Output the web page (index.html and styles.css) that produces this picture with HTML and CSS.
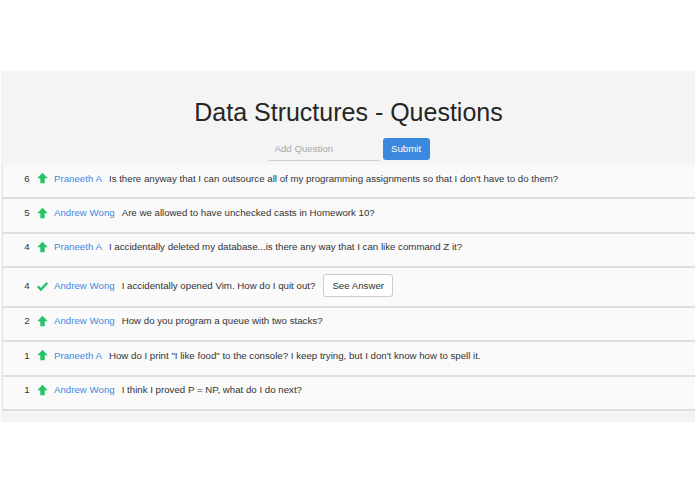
FILE: index.html
```html
<!DOCTYPE html>
<html>
<head>
<meta charset="utf-8">
<link rel="stylesheet" href="styles.css">
</head>
<body>
<div class="panel">
  <div class="header">
    <h1 class="title">Data Structures - Questions</h1>
    <form class="ask">
      <input class="ask-input" type="text" placeholder="Add Question">
      <button class="btn-submit" type="button">Submit</button>
    </form>
  </div>
  <ul class="questions">
    <li class="q">
      <span class="votes">6</span>
      <svg class="ico" viewBox="0 0 12 12"><path d="M6 0.3 L11.7 6.2 L8.4 6.2 L8.4 11.8 L3.6 11.8 L3.6 6.2 L0.3 6.2 Z" fill="#27c26a"/></svg>
      <a class="author">Praneeth A</a>
      <span class="text">Is there anyway that I can outsource all of my programming assignments so that I don't have to do them?</span>
    </li>
    <li class="q">
      <span class="votes">5</span>
      <svg class="ico" viewBox="0 0 12 12"><path d="M6 0.3 L11.7 6.2 L8.4 6.2 L8.4 11.8 L3.6 11.8 L3.6 6.2 L0.3 6.2 Z" fill="#27c26a"/></svg>
      <a class="author">Andrew Wong</a>
      <span class="text">Are we allowed to have unchecked casts in Homework 10?</span>
    </li>
    <li class="q">
      <span class="votes">4</span>
      <svg class="ico" viewBox="0 0 12 12"><path d="M6 0.3 L11.7 6.2 L8.4 6.2 L8.4 11.8 L3.6 11.8 L3.6 6.2 L0.3 6.2 Z" fill="#27c26a"/></svg>
      <a class="author">Praneeth A</a>
      <span class="text">I accidentally deleted my database...is there any way that I can like command Z it?</span>
    </li>
    <li class="q q-answered">
      <span class="votes">4</span>
      <svg class="ico" viewBox="0 0 12 12"><path d="M0.8 6.3 L4.3 9.8 L11.2 2.6" fill="none" stroke="#27c26a" stroke-width="2.6"/></svg>
      <a class="author">Andrew Wong</a>
      <span class="text">I accidentally opened Vim. How do I quit out?</span>
      <button class="btn-answer" type="button">See Answer</button>
    </li>
    <li class="q">
      <span class="votes">2</span>
      <svg class="ico" viewBox="0 0 12 12"><path d="M6 0.3 L11.7 6.2 L8.4 6.2 L8.4 11.8 L3.6 11.8 L3.6 6.2 L0.3 6.2 Z" fill="#27c26a"/></svg>
      <a class="author">Andrew Wong</a>
      <span class="text">How do you program a queue with two stacks?</span>
    </li>
    <li class="q">
      <span class="votes">1</span>
      <svg class="ico" viewBox="0 0 12 12"><path d="M6 0.3 L11.7 6.2 L8.4 6.2 L8.4 11.8 L3.6 11.8 L3.6 6.2 L0.3 6.2 Z" fill="#27c26a"/></svg>
      <a class="author">Praneeth A</a>
      <span class="text">How do I print "I like food" to the console? I keep trying, but I don't know how to spell it.</span>
    </li>
    <li class="q">
      <span class="votes">1</span>
      <svg class="ico" viewBox="0 0 12 12"><path d="M6 0.3 L11.7 6.2 L8.4 6.2 L8.4 11.8 L3.6 11.8 L3.6 6.2 L0.3 6.2 Z" fill="#27c26a"/></svg>
      <a class="author">Andrew Wong</a>
      <span class="text">I think I proved P = NP, what do I do next?</span>
    </li>
  </ul>
</div>
</body>
</html>
```
FILE: styles.css
```css
html, body {
  margin: 0;
  padding: 0;
  background: #ffffff;
  font-family: "Liberation Sans", Arial, sans-serif;
  color: #333333;
  overflow: hidden;
}
.panel {
  margin: 71px 0 0 2px;
  background: #f4f4f4;
  padding-bottom: 11px;
  box-shadow: 0 1px 2px rgba(0,0,0,0.15);
}
.header {
  padding-top: 26px;
  display: flex;
  flex-direction: column;
  align-items: center;
}
.title {
  margin: 0;
  font-size: 25px;
  font-weight: normal;
  line-height: 30px;
  color: #262626;
}
.ask {
  margin: 9px 0 4px 0;
  display: flex;
  align-items: center;
  gap: 3px;
}
.ask-input {
  width: 112px;
  height: 25px;
  box-sizing: border-box;
  border: none;
  border-bottom: 1px solid #cfcfcf;
  background: transparent;
  padding: 0 7px;
  font-family: inherit;
  font-size: 9.7px;
  outline: none;
}
.ask-input::placeholder {
  color: #a8a8a8;
}
.btn-submit {
  height: 22px;
  width: 47px;
  padding: 0;
  border: none;
  border-radius: 3px;
  background: #3b88df;
  color: #ffffff;
  font-family: inherit;
  font-size: 9.7px;
}
.questions {
  list-style: none;
  margin: 0;
  padding: 0;
}
.q {
  display: flex;
  align-items: center;
  box-sizing: border-box;
  height: 34.4px;
  padding: 0 0 6px 21px;
  background: #fafafa;
  border-bottom: 2px solid #dedede;
  border-left: 1px solid #e6e6e6;
  font-size: 9.7px;
  white-space: nowrap;
}
.q-answered {
  height: 39.6px;
  padding-bottom: 2px;
}
.votes {
  width: 6px;
  text-align: center;
  margin-right: 7px;
}
.ico {
  width: 11px;
  height: 12px;
  margin-right: 6px;
}
.author {
  color: #3e8ae0;
  margin-right: 7px;
}
.text {
  color: #333333;
}
.btn-answer {
  margin-left: 8px;
  height: 23px;
  padding: 0 8px;
  background: #ffffff;
  border: 1px solid #cccccc;
  border-radius: 3px;
  font-family: inherit;
  font-size: 9.7px;
  color: #333333;
}
```
